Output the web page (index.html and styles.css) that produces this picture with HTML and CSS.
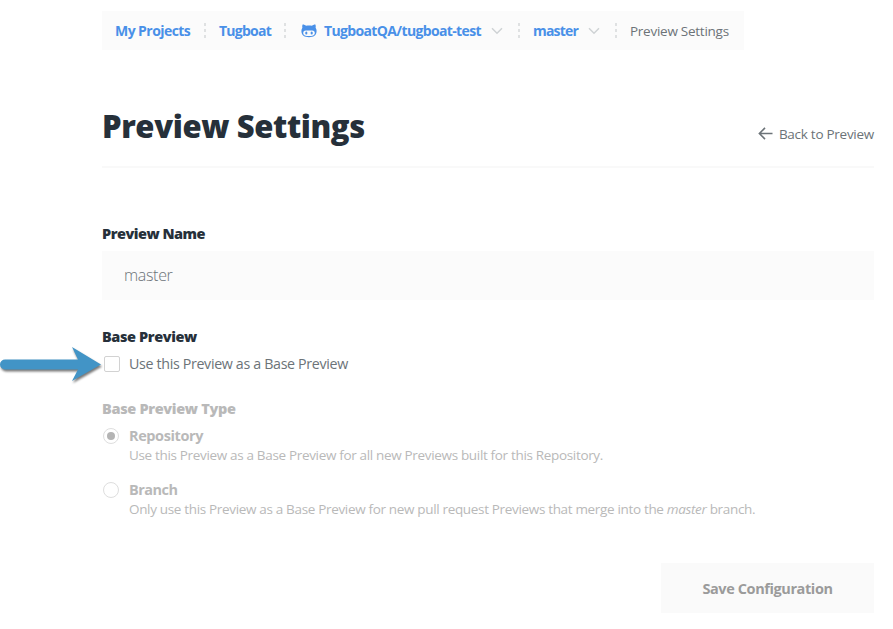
FILE: index.html
```html
<!DOCTYPE html>
<html lang="en">
<head>
<meta charset="utf-8">
<title>Preview Settings</title>
<link rel="stylesheet" href="styles.css">
</head>
<body>
<main class="page">
  <nav class="crumbs">
    <a class="crumb projects">My Projects</a>
    <a class="crumb tugboat">Tugboat</a>
    <a class="crumb repo">
      <svg class="cat" width="16" height="14" viewBox="0 0 16 14"><path fill="#4990e8" fill-rule="evenodd" d="M1.6 .5C2.9.4 4.2 1.1 5 1.7 7 1.3 9 1.3 11 1.7 11.800 1.100 13.100.400 14.400.500 14.900 1.800 14.800 3 14.600 3.800 15.300 4.700 15.600 5.700 15.600 7 15.600 11.500 12.500 13.200 8 13.200S.4 11.500.4 7C.4 5.700.7 4.700 1.400 3.800 1.200 3 1.100 1.800 1.600.500ZM4.700 6.400C3 6.400 2.200 7.600 2.200 8.900 2.200 11.400 4.600 12 8 12S13.800 11.400 13.800 8.900C13.800 7.600 13 6.400 11.300 6.400 10.200 6.400 9.100 6.600 8 6.600S5.800 6.400 4.700 6.400Z"/><ellipse cx="5.300" cy="9" rx="1.100" ry="1.600" fill="#4990e8"/><ellipse cx="10.700" cy="9" rx="1.100" ry="1.600" fill="#4990e8"/></svg>
      <span>TugboatQA/tugboat-test</span>
      <svg class="chevron" width="12" height="8" viewBox="0 0 12 8"><path d="M1 1.200 6 6.200 11 1.200"/></svg>
    </a>
    <a class="crumb branch"><span>master</span>
      <svg class="chevron" width="12" height="8" viewBox="0 0 12 8"><path d="M1 1.200 6 6.200 11 1.200"/></svg>
    </a>
    <span class="crumb current">Preview Settings</span>
  </nav>

  <header class="heading">
    <h1>Preview Settings</h1>
    <a class="back"><svg width="15" height="13" viewBox="0 0 15 13"><path d="M14.500 6.500H1.500M7 .9 1.400 6.500 7 12.100"/></svg><span>Back to Preview</span></a>
  </header>

  <form>
    <label class="label name-label">Preview Name</label>
    <div class="input">master</div>

    <div class="label base-label">Base Preview</div>
    <label class="use">
      <svg class="arrow" width="106" height="44" viewBox="0 0 106 44"><path d="M5 16.500H78L72 4 101 21.500 72 38 78 26.500H5A5 5 0 0 1 5 16.500Z"/></svg>
      <span class="box"></span><span>Use this Preview as a Base Preview</span>
    </label>

    <div class="label type-label">Base Preview Type</div>
    <div class="option">
      <span class="radio checked"></span>
      <div><div class="option-name repository">Repository</div><div class="hint">Use this Preview as a Base Preview for all new Previews built for this Repository.</div></div>
    </div>
    <div class="option">
      <span class="radio"></span>
      <div><div class="option-name">Branch</div><div class="hint">Only use this Preview as a Base Preview for new pull request Previews that merge into the <i>master</i> branch.</div></div>
    </div>
    <div class="save">Save Configuration</div>
  </form>
</main>
</body>
</html>
```
FILE: styles.css
```css
* { box-sizing: border-box; }
body { margin: 0; background: #fff; color: #6c7378; font-family: "Open Sans", sans-serif; white-space: nowrap; overflow: hidden; }
.page { margin: 11px 19px 0 102px; }

.crumbs { display: grid; grid-template-columns: 101px 80px 234px 97px 130px; width: 642px; height: 39px; background: #fbfbfb; }
.crumb { display: flex; align-items: center; padding-left: 13px; color: #4990e8; font-size: 14px; font-weight: 700; letter-spacing: -.56px; }
.crumb + .crumb { background: repeating-linear-gradient(#dfe1e2 0 3px, transparent 3px 6px) 1px 12px / 2px 15px no-repeat; padding-left: 16px; }
.crumb + .crumb.repo { padding-left: 18px; letter-spacing: -.64px; }
.crumb.repo span { margin-left: 7px; }
.crumb + .crumb.branch { padding-left: 16px; letter-spacing: -.8px; }
.crumb + .crumb.tugboat { letter-spacing: -.75px; }
.crumb + .crumb.current { padding-left: 16px; color: #6c7378; font-size: 13.5px; font-weight: 400; letter-spacing: -.26px; }
.cat { position: relative; top: .5px; }
.chevron { margin-left: 10px; fill: none; stroke: #cfd3d5; stroke-width: 1.500; }

.heading { display: flex; justify-content: space-between; height: 118px; border-bottom: 2px solid #f9f9f9; padding-top: 55px; }
h1 { margin: 0; color: #26303a; font-size: 31px; font-weight: 800; line-height: 42px; letter-spacing: -.38px; }
.back { display: flex; align-items: center; height: 20px; margin-top: 19px; font-size: 13.5px; letter-spacing: -.27px; }
.back svg { position: relative; top: -1px; margin-right: 6px; fill: none; stroke: #6c7378; stroke-width: 1.600; }

.label { color: #26303a; font-size: 14.500px; font-weight: 800; line-height: 20px; letter-spacing: -.4px; }
.name-label { display: block; margin-top: 56px; letter-spacing: -.5px; }
.input { height: 49px; margin-top: 7px; padding-left: 22px; background: #fbfbfb; font-size: 16px; font-weight: 300; line-height: 48px; letter-spacing: -.32px; }
.base-label { margin-top: 27px; }
.use { position: relative; display: flex; align-items: center; height: 20px; margin-top: 6px; font-size: 14.250px; letter-spacing: -.34px; }
.box { width: 16px; height: 16px; margin: 2px 9px 0 2px; border: 1px solid #d2d2d2; border-radius: 2px; background: #fff; }
.arrow { position: absolute; left: -102px; top: -10px; fill: #4294c6; filter: drop-shadow(1px 2px 1px #0008); }
.type-label { margin-top: 26px; color: #b9b9b9; letter-spacing: -.33px; }
.option { display: flex; height: 47px; margin-top: 7px; color: #b9b9b9; }
.radio { display: flex; align-items: center; justify-content: center; width: 16px; height: 16px; margin: 2px 10px 0 1px; border: 1px solid #dedede; border-radius: 50%; }
.checked::after { content: ""; width: 8px; height: 8px; border-radius: 50%; background: #b4b4b4; }
.option-name { font-size: 14.500px; font-weight: 700; line-height: 20px; letter-spacing: -.5px; }
.repository { letter-spacing: -.4px; }
.hint { font-size: 13.500px; line-height: 18px; letter-spacing: -.332px; }
.save { width: 213px; height: 50px; margin: 36px 0 0 auto; background: #fafafa; color: #9b9b9b; font-size: 14.500px; font-weight: 700; line-height: 51px; letter-spacing: -.4px; text-align: center; }
```
